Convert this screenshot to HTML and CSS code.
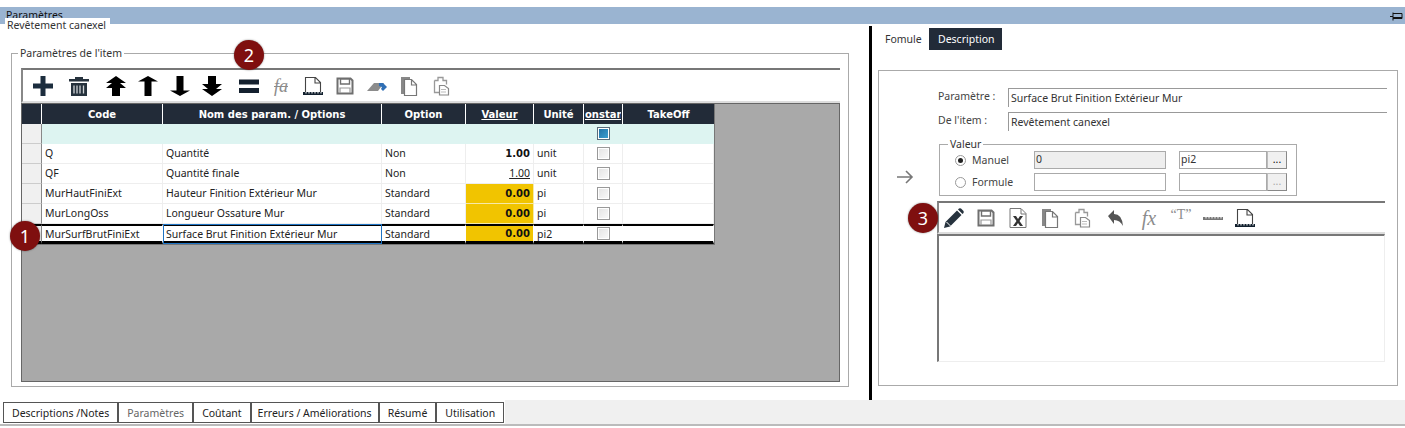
FILE: index.html
```html
<!DOCTYPE html>
<html lang="fr">
<head>
  <meta charset="UTF-8" />
  <title>Paramètres</title>
  <link rel="stylesheet" href="styles.css">
</head>
<body>
  <svg class="defs" width="0" height="0">
    <symbol id="i-save" viewBox="0 0 32 20">
      <path d="M8.500 2.500h13l2 2v13h-15z" fill="#fff" stroke="#6f6f6f" stroke-width="2"/>
      <path d="M11.500 3h9v5h-9z" fill="#fff" stroke="#6f6f6f" stroke-width="1.400"/>
      <path d="M11 17v-5h10v5" fill="none" stroke="#999" stroke-width="1.200"/>
    </symbol>
    <symbol id="i-copy" viewBox="0 0 32 20">
      <path d="M8 1h9v2H11v15H8z" fill="#888"/>
      <path d="M11.500 3.500h7l5 5v11h-12z M18.500 4v5h5" fill="#fff" stroke="#777" stroke-width="1.200"/>
    </symbol>
    <symbol id="i-paste" viewBox="0 0 32 20">
      <path d="M9.500 4.500h3.500v-3h5v3h3.500v4 M9.500 4.500v12h5" fill="none" stroke="#999" stroke-width="1.300"/>
      <path d="M14.500 9.500h5l4 3v6.500h-9z" fill="#fff" stroke="#888" stroke-width="1.200"/>
      <path d="M16 13.500h5 M16 16h5" stroke="#bbb"/>
    </symbol>
    <symbol id="i-doc" viewBox="0 0 32 20">
      <path d="M8.500 16V1.500h10l5 5v9.500 M18 2v5h5.500" fill="none" stroke="#444" stroke-width="1.100"/>
      <path d="M6 16h20v3H6z" fill="#12202e"/>
      <path d="M9 16v1.500M12 16v1.500M15 16v1.500M18 16v1.500M21 16v1.500M24 16v1.500" stroke="#fff"/>
    </symbol>
  </svg>

  <div class="titlebar">
    <span class="title">Paramètres</span>
    <svg class="pin" width="13" height="9" viewBox="0 0 13 9"><path d="M0 4.500h3 M3 .500v8 M3 1.500h9v5H3 M3 5.500h9" fill="none" stroke="#111"/></svg>
  </div>

  <div class="main">
    <div class="left">
      <div class="itemtab">Revêtement canexel</div>

      <fieldset class="params">
        <legend>Paramètres de l'item</legend>

        <div class="toolbar">
          <svg class="tool" viewBox="0 0 32 20"><path d="M13.500 0h5v7.500H26v5h-7.500V20h-5v-7.500H6v-5h7.500z" fill="#1c2d3e"/></svg>
          <svg class="tool gap4" viewBox="0 0 32 20"><path d="M6 3h6V1h8v2h6v2.500H6zM8 7h16v13H8z" fill="#26323d"/><path d="M11 9.500v8M14 9.500v8M17 9.500v8M20.500 9.500v8" stroke="#cfd3d6" stroke-width="1.300"/></svg>
          <svg class="tool gap5" viewBox="0 0 32 20"><path d="M16 0l10 7h-6l6 5h-6v8h-8v-8H6l6-5H6z" fill="#000"/></svg>
          <svg class="tool" viewBox="0 0 32 20"><path d="M16 0l10 5.500h-6.500V20h-7V5.500H6z" fill="#000"/></svg>
          <svg class="tool" viewBox="0 0 32 20"><path d="M12.500 0h7v14.500H26L16 20 6 14.500h6.500z" fill="#000"/></svg>
          <svg class="tool" viewBox="0 0 32 20"><path d="M12 0h8v8h6l-6 5h6l-10 7-10-7h6l-6-5h6z" fill="#000"/></svg>
          <svg class="tool gap5" viewBox="0 0 32 20"><path d="M6 3.500h20v5H6zM6 12h20v5H6z" fill="#14202e"/></svg>
          <span class="tool fx">fa</span>
          <svg class="tool"><use href="#i-doc"/></svg>
          <svg class="tool"><use href="#i-save"/></svg>
          <svg class="tool" viewBox="0 0 32 20"><path d="M6 15l7-8h10l-6 8z" fill="#8c8c8c"/><path d="M18 7l4 0 4 4-4 4-2-2 1-2-3-1z" fill="#2f6fb5"/></svg>
          <svg class="tool"><use href="#i-copy"/></svg>
          <svg class="tool"><use href="#i-paste"/></svg>
        </div>

        <div class="gridarea">
          <table class="grid">
            <colgroup>
              <col class="c-head"><col class="c-code"><col class="c-name"><col class="c-opt"><col class="c-val"><col class="c-unit"><col class="c-const"><col class="c-take">
            </colgroup>
            <thead>
              <tr>
                <th></th>
                <th>Code</th>
                <th>Nom des param. / Options</th>
                <th>Option</th>
                <th><u>Valeur</u></th>
                <th>Unité</th>
                <th><div class="clip"><u>Constant</u></div></th>
                <th>TakeOff</th>
              </tr>
            </thead>
            <tbody>
              <tr class="newrow">
                <td class="rh"></td><td></td><td></td><td></td><td></td><td></td>
                <td class="chk"><span class="box on"></span></td><td></td>
              </tr>
              <tr>
                <td class="rh"></td><td>Q</td><td>Quantité</td><td>Non</td>
                <td class="num strong">1.00</td><td>unit</td>
                <td class="chk"><span class="box"></span></td><td></td>
              </tr>
              <tr>
                <td class="rh"></td><td>QF</td><td>Quantité finale</td><td>Non</td>
                <td class="num"><u>1.00</u></td><td>unit</td>
                <td class="chk"><span class="box"></span></td><td></td>
              </tr>
              <tr>
                <td class="rh"></td><td>MurHautFiniExt</td><td>Hauteur Finition Extérieur Mur</td><td>Standard</td>
                <td class="num strong warn">0.00</td><td>pi</td>
                <td class="chk"><span class="box"></span></td><td></td>
              </tr>
              <tr>
                <td class="rh"></td><td>MurLongOss</td><td>Longueur Ossature Mur</td><td>Standard</td>
                <td class="num strong warn">0.00</td><td>pi</td>
                <td class="chk"><span class="box"></span></td><td></td>
              </tr>
              <tr class="selected">
                <td class="rh"></td><td>MurSurfBrutFiniExt</td><td class="focus">Surface Brut Finition Extérieur Mur</td><td>Standard</td>
                <td class="num strong warn">0.00</td><td>pi2</td>
                <td class="chk"><span class="box"></span></td><td></td>
              </tr>
            </tbody>
          </table>
        </div>
      </fieldset>
    </div>

    <div class="splitter"></div>

    <div class="right">
      <div class="tabs">
        <span class="tab">Fomule</span>
        <span class="tab active">Description</span>
      </div>

      <div class="descbox">
        <div class="inforow">
          <label>Paramètre :</label>
          <div class="readonly">Surface Brut Finition Extérieur Mur</div>
        </div>
        <div class="inforow">
          <label>De l'item :</label>
          <div class="readonly">Revêtement canexel</div>
        </div>

        <div class="valuerow">
          <svg class="arrow" width="18" height="14" viewBox="0 0 18 14"><path d="M1 7h15 M10 1l6 6-6 6" fill="none" stroke="#777" stroke-width="1.600"/></svg>
          <fieldset class="valeur">
            <legend>Valeur</legend>
            <div class="vline">
              <span class="radio on"></span><span class="rlabel">Manuel</span>
              <span class="field disabled">0</span>
              <span class="field unit">pi2</span><span class="dots">...</span>
            </div>
            <div class="vline">
              <span class="radio"></span><span class="rlabel">Formule</span>
              <span class="field"></span>
              <span class="field unit"></span><span class="dots off">...</span>
            </div>
          </fieldset>
        </div>

        <div class="toolbar editbar">
          <svg class="tool pencil" viewBox="0 0 32 20"><path d="M6 20l1.500-6L19 2.500l4.500 4.500L12 18.500z" fill="#26323d"/><path d="M20 1.500l1-1q1-.5 2 0l2.500 2.500q.5 1 0 2l-1 1z" fill="#26323d"/><path d="M8.500 14l4 4" stroke="#fff"/></svg>
          <svg class="tool"><use href="#i-save"/></svg>
          <svg class="tool" viewBox="0 0 32 20"><path d="M8 .500h11l5 5v14H8z M19 1v5h5" fill="#fff" stroke="#777"/><path d="M11 8h3l2 3 2-3h3l-3.500 5 3.500 5h-3l-2-3-2 3h-3l3.500-5z" fill="#333"/></svg>
          <svg class="tool"><use href="#i-copy"/></svg>
          <svg class="tool"><use href="#i-paste"/></svg>
          <svg class="tool gap1" viewBox="0 0 32 20"><path d="M9 8l6-6v4q8 0 9 12-3-6-9-6v4z" fill="#555"/></svg>
          <span class="tool fx wide">fx</span>
          <span class="tool quote">“T”</span>
          <svg class="tool" viewBox="0 0 32 20"><path d="M6 9h20v3H6z" fill="#777"/><path d="M9 9v1.500M12 9v1.500M15 9v1.500M18 9v1.500M21 9v1.500M24 9v1.500" stroke="#fff"/></svg>
          <svg class="tool"><use href="#i-doc"/></svg>
        </div>
        <div class="editor"></div>
      </div>
    </div>
  </div>

  <div class="bottom">
    <div class="bottomtabs">
      <span class="btab">Descriptions /Notes</span>
      <span class="btab current">Paramètres</span>
      <span class="btab">Coûtant</span>
      <span class="btab narrow">Erreurs / Améliorations</span>
      <span class="btab">Résumé</span>
      <span class="btab">Utilisation</span>
    </div>
    <div class="bottomfill"></div>
  </div>

  <span class="badge b1">1</span>
  <span class="badge b2">2</span>
  <span class="badge b3">3</span>
</body>
</html>
```

FILE: styles.css
```css
* {
  box-sizing: border-box;
}
html, body {
  height: 428px;
  overflow: hidden;
}
body {
  margin: 0;
  background: #fff;
  color: #222;
  font-family: "Noto Sans", sans-serif;
  font-size: 10.5px;
  line-height: 14px;
  position: relative;
}
.defs {
  position: absolute;
}

/* title */
.titlebar {
  height: 17px;
  margin-top: 7px;
  padding: 1px 2px 0 6px;
  background: #9ab4d1;
  display: flex;
  justify-content: space-between;
  align-items: flex-start;
  color: #111;
}
.pin {
  margin-top: 4px;
}

.main {
  display: flex;
  height: 376px;
}

/* left side */
.left {
  width: 869px;
}
.itemtab {
  width: 105px;
  height: 14px;
  margin: -6px 0 0 5px;
  padding-left: 2px;
  background: #fff;
  position: relative;
  color: #333;
  white-space: nowrap;
}
.params {
  width: 838px;
  height: 341px;
  margin: 14px 0 0 11px;
  padding: 0 8px 3px 9px;
  border: 1px solid #aaa;
}
.params legend {
  margin-left: -3px;
  padding: 0 2px;
  color: #333;
}
.toolbar {
  height: 35px;
  margin-top: 8px;
  padding-left: 4px;
  display: flex;
  align-items: center;
  border-top: 2px solid #777;
  border-left: 2px solid #888;
  border-bottom: 2px solid #ddd;
}
.tool {
  flex: none;
  width: 32px;
  height: 20px;
}
.gap1 {
  margin-left: 1px;
}
.gap4 {
  margin-left: 4px;
}
.gap5 {
  margin-left: 5px;
}
.fx {
  font-family: "Liberation Serif", serif;
  font-style: italic;
  font-size: 18px;
  line-height: 20px;
  text-align: center;
  color: #8c8c8c;
  text-decoration: line-through;
  text-decoration-thickness: 1px;
}
.fx.wide {
  margin-left: 2px;
  font-size: 20px;
  text-decoration: none;
}
.quote {
  font-family: "Liberation Serif", serif;
  font-size: 14px;
  line-height: 14px;
  text-align: center;
  color: #8c8c8c;
}

/* grid */
.gridarea {
  height: 279px;
  background: #a9a9a9;
  border: 1px solid #666;
}
.grid {
  width: 693px;
  table-layout: fixed;
  border-collapse: separate;
  border-spacing: 0;
  background: #fff;
  border-right: 1px solid #777;
  border-bottom: 1px solid #777;
}
.c-head { width: 20px; }
.c-code { width: 121px; }
.c-name { width: 219px; }
.c-opt { width: 84px; }
.c-val { width: 68px; }
.c-unit { width: 50px; }
.c-const { width: 39px; }
.c-take { width: 91px; }

.grid th {
  height: 20px;
  padding: 1px 0 0;
  background: #222b38;
  border-right: 1px solid #fff;
  color: #fff;
  font-family: "DejaVu Sans", sans-serif;
  font-size: 10px;
  font-weight: bold;
  white-space: nowrap;
}
.grid th:last-child {
  border-right: 0;
}
.clip {
  display: flex;
  justify-content: center;
  overflow: hidden;
  margin: 0 1px;
}
.grid td {
  height: 20px;
  padding: 0 3px 1px;
  border-right: 1px solid #eee;
  border-bottom: 1px solid #eee;
  white-space: nowrap;
  overflow: hidden;
}
.grid td.rh {
  background: #f0f0f0;
  border-right: 1px solid #888;
  border-bottom: 1px solid #ccc;
}
.grid .newrow td {
  background: #ddf4f1;
  border-color: #ddf4f1;
}
.grid .newrow td.rh {
  background: #f0f0f0;
  border-right-color: #888;
  border-bottom-color: #ccc;
}
.grid td.num {
  text-align: right;
}
.grid td.strong {
  padding-bottom: 0;
  font-family: "DejaVu Sans", sans-serif;
  font-size: 10px;
  font-weight: bold;
  color: #111;
}
.grid td.warn {
  background: #f1c400;
  border-color: #f6e9a8;
}
.grid td.chk {
  padding: 3px 0 0;
  vertical-align: top;
}
.box {
  display: block;
  width: 13px;
  height: 13px;
  margin: 0 auto;
  border: 1px solid #999;
  background: linear-gradient(135deg, #e2e2e2, #fafafa);
  box-shadow: inset 0 0 0 1px #fff;
}
.box.on {
  border-color: #5a6b7a;
  background: linear-gradient(135deg, #1f6da0, #3fa3d6);
}
.grid .selected td {
  padding-bottom: 0;
  border-top: 2px solid #000;
  border-bottom: 3px solid #000;
  border-right-color: #fff;
}
.grid .selected td.rh {
  border-right-color: #888;
}
.grid .selected td.chk {
  padding: 1px 0 0 1px;
}
.grid td.focus {
  outline: 1px solid #1f74c4;
  outline-offset: -1px;
}

/* splitter */
.splitter {
  width: 3px;
  margin-top: 2px;
  background: #000;
}

/* right side */
.right {
  flex: 1;
  padding: 0 7px 0 6px;
}
.tabs {
  height: 46px;
  padding-top: 4px;
  display: flex;
  align-items: flex-start;
}
.tab {
  width: 51px;
  height: 22px;
  padding: 4px 7px;
  color: #333;
  white-space: nowrap;
}
.tab.active {
  width: 73px;
  padding: 4px 9px;
  background: #222b38;
  color: #fff;
}
.descbox {
  height: 316px;
  padding: 17px 12px 0 58px;
  border: 1px solid #aaa;
}
.inforow {
  display: flex;
  height: 24px;
  margin-right: -2px;
}
.inforow label {
  width: 71px;
  padding-top: 1px;
  padding-left: 1px;
  color: #444;
}
.readonly {
  flex: 1;
  height: 19px;
  padding: 2px;
  border-top: 1px solid #999;
  border-left: 1px solid #999;
  color: #333;
}
.valuerow {
  position: relative;
}
.arrow {
  position: absolute;
  left: -41px;
  top: 32px;
}
.valeur {
  width: 358px;
  height: 58px;
  margin: 2px 0 0 2px;
  padding: 1px 9px 0 15px;
  border: 1px solid #aaa;
}
.valeur legend {
  margin-left: -7px;
  padding: 0 2px;
  line-height: 12px;
  color: #333;
}
.vline {
  display: flex;
  align-items: center;
  height: 18px;
  margin-bottom: 4px;
}
.radio {
  width: 11px;
  height: 11px;
  margin-right: 6px;
  border: 1px solid #999;
  border-radius: 50%;
  background: #fff;
  flex: none;
  position: relative;
}
.radio.on::after {
  content: "";
  position: absolute;
  left: 2px;
  top: 2px;
  width: 5px;
  height: 5px;
  border-radius: 50%;
  background: #222;
}
.rlabel {
  width: 62px;
  color: #444;
}
.field {
  width: 132px;
  height: 18px;
  padding: 0 1px;
  border: 1px solid #aaa;
  color: #333;
}
.field.disabled {
  background: #eee;
}
.field.unit {
  width: 88px;
  margin-left: 13px;
}
.dots {
  width: 20px;
  height: 18px;
  text-align: center;
  background: #f0f0f0;
  border: 1px solid #bbb;
  border-right-color: #888;
  border-bottom-color: #888;
  color: #111;
}
.dots.off {
  color: #aaa;
}
.editbar {
  height: 33px;
  margin-top: 5px;
  padding-left: 1px;
}
.pencil {
  margin-left: -2px;
}
.editor {
  height: 128px;
  border-top: 2px solid #777;
  border-left: 2px solid #777;
  border-right: 1px solid #eee;
  border-bottom: 1px solid #eee;
}

/* bottom tabs */
.bottom {
  display: flex;
  height: 26px;
  border-bottom: 2px solid #bbb;
}
.bottomtabs {
  display: flex;
  width: 505px;
  padding: 2px 0 1px 3px;
}
.btab {
  padding: 3px 8px;
  border: 1px solid #555;
  color: #222;
  white-space: nowrap;
}
.btab.narrow {
  padding: 3px 6px;
}
.btab.current {
  color: #666;
}
.bottomfill {
  flex: 1;
  background: #f0f0f0;
}

/* numbered callouts */
.badge {
  position: absolute;
  width: 30px;
  height: 30px;
  border-radius: 50%;
  background: #7f0f0f;
  box-shadow: 0 0 2px rgba(0, 0, 0, 0.5);
  color: #fff;
  font-size: 18px;
  line-height: 30px;
  text-align: center;
}
.b1 { left: 10px; top: 221px; }
.b2 { left: 234px; top: 40px; }
.b3 { left: 908px; top: 203px; }
```
